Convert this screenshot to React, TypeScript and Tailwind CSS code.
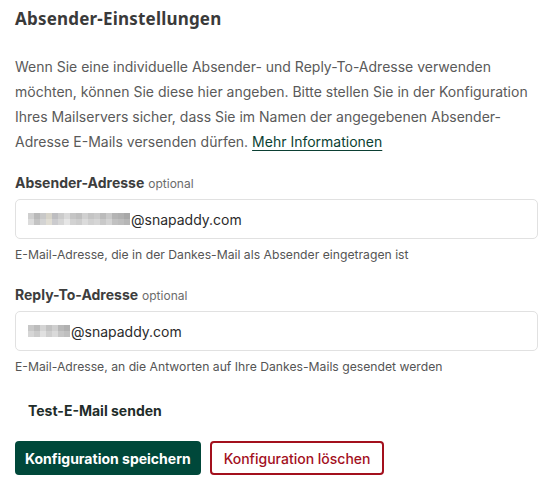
import React from "react"

const mosaicA = [
  ["#cfcfcf", "#b9b9b9", "#c8c8c8", "#d6d3c9", "#bdbdc0", "#cbcbcb", "#d9d9d9", "#c5c5c5", "#bfbfbf", "#d0d0d0", "#c4c4c4", "#cacaca", "#bbbbbb", "#c9c9c9", "#b4b4b4", "#b0b0b0", "#a8a8a8"],
  ["#dcdcdc", "#c3c3c3", "#d3d3d3", "#e0ddd4", "#cbcbce", "#d6d6d6", "#e6e6e6", "#d2d2d2", "#cdcdcd", "#dbdbdb", "#d1d1d1", "#d6d6d6", "#c9c9c9", "#d4d4d4", "#c1c1c1", "#bdbdbd", "#b6b6b6"],
]
const mosaicB = [
  ["#c8c8c8", "#bcbcbc", "#d4d4d4", "#c2c2c2", "#cfcfcf", "#b8b8b8", "#b0b0b0"],
  ["#d6d6d6", "#cbcbcb", "#e0e0e0", "#cecece", "#dadada", "#c6c6c6", "#bfbfbf"],
]

function Mosaic({ rows }: { rows: string[][] }) {
  return (
    <span className="inline-flex flex-col mr-px">
      {rows.map((row, i) => (
        <span key={i} className="flex">
          {row.map((c, j) => (
            <span key={j} className="w-[6px] h-[6px]" style={{ backgroundColor: c }} />
          ))}
        </span>
      ))}
    </span>
  )
}

function Field({ label, mosaic, domain, help }: { label: string; mosaic: string[][]; domain: string; help: string }) {
  return (
    <div>
      <div className="flex items-baseline gap-1 h-[20px]">
        <span className="text-[14px] font-bold text-[#3d3d3d]">{label}</span>
        <span className="text-[12px] text-[#6b6b6b]">optional</span>
      </div>
      <div className="mt-[7px] h-[40px] w-[523px] border border-[#e1e1e1] rounded-[5px] flex items-center pl-[12px] text-[14px] text-[#2b2b2b]">
        <Mosaic rows={mosaic} />
        <span>{domain}</span>
      </div>
      <p className="mt-[8px] text-[12.2px] text-[#555] leading-[16px]">{help}</p>
    </div>
  )
}

export default function App() {
  return (
    <div className="w-[556px] h-[497px] bg-white px-[15px] pt-[6px] font-['Inter',sans-serif]">
      {/* HEADER */}
      <h1 className="text-[17px] font-bold text-[#3a3a3a] leading-[26px] tracking-[0.2px] font-['Noto_Sans',sans-serif]">
        Absender-Einstellungen
      </h1>

      <p className="mt-[22px] text-[14px] leading-[25px] text-[#5a5a5a] w-[520px]">
        Wenn Sie eine individuelle Absender- und Reply-To-Adresse verwenden möchten, können Sie diese hier angeben. Bitte stellen Sie in der Konfiguration Ihres Mailservers sicher, dass Sie im Namen der angegebenen Absender-Adresse E-Mails versenden dürfen.{" "}
        <a className="text-[#0b3f33] underline underline-offset-[3px] decoration-[#0b3f33]">Mehr Informationen</a>
      </p>

      <div className="mt-[18px]">
        <Field
          label="Absender-Adresse"
          mosaic={mosaicA}
          domain="@snapaddy.com"
          help="E-Mail-Adresse, die in der Dankes-Mail als Absender eingetragen ist"
        />
      </div>

      <div className="mt-[21px]">
        <Field
          label="Reply-To-Adresse"
          mosaic={mosaicB}
          domain="@snapaddy.com"
          help="E-Mail-Adresse, an die Antworten auf Ihre Dankes-Mails gesendet werden"
        />
      </div>

      <button className="mt-[25px] ml-[13px] text-[14px] font-bold text-[#1f2d2a]">Test-E-Mail senden</button>

      {/* ACTIONS */}
      <div className="mt-[19px] flex gap-[9px]">
        <button className="h-[34px] px-[10px] rounded-[4px] bg-[#00483a] text-white text-[14px] font-bold">
          Konfiguration speichern
        </button>
        <button className="h-[34px] px-[12px] rounded-[4px] border-2 border-[#a3101d] text-[#a3101d] text-[14px] font-medium">
          Konfiguration löschen
        </button>
      </div>
    </div>
  )
}
